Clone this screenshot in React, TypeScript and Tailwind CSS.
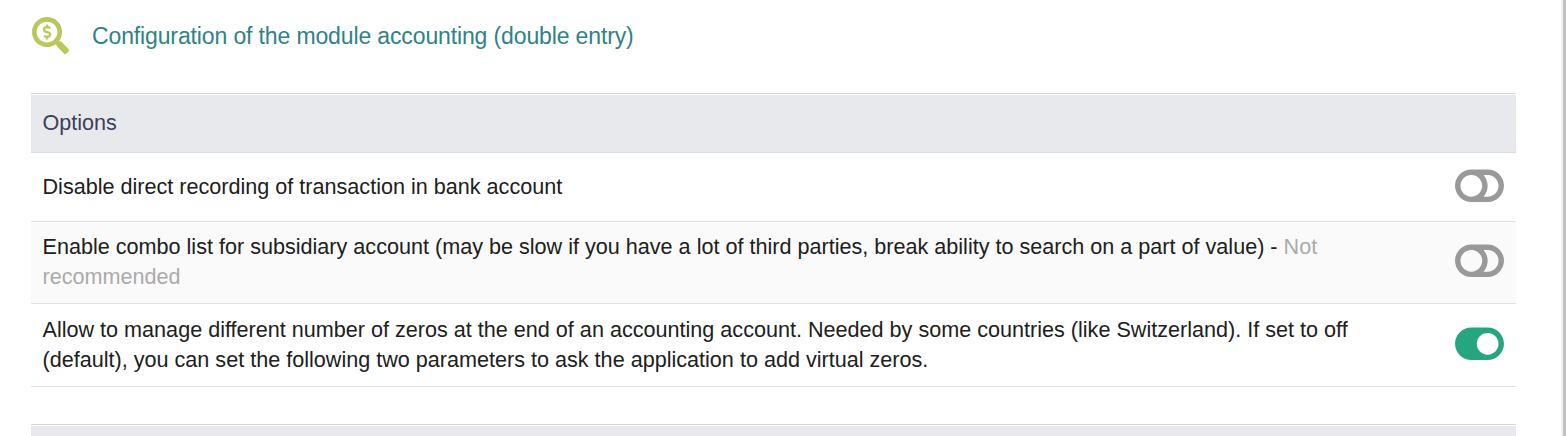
import React, { useState } from "react";
import { FaSearchDollar, FaToggleOff, FaToggleOn } from "react-icons/fa";

const options = [
  {
    id: "bank",
    label: "Disable direct recording of transaction in bank account",
    note: "",
    enabled: false,
    rowClass: "h-[69px] bg-white",
  },
  {
    id: "combo",
    label:
      "Enable combo list for subsidiary account (may be slow if you have a lot of third parties, break ability to search on a part of value) - ",
    note: "Not recommended",
    enabled: false,
    rowClass: "h-[82px] bg-[#fafafa] pb-[1px]",
  },
  {
    id: "zeros",
    label:
      "Allow to manage different number of zeros at the end of an accounting account. Needed by some countries (like Switzerland). If set to off (default), you can set the following two parameters to ask the application to add virtual zeros.",
    note: "",
    enabled: true,
    rowClass: "h-[83px] bg-white",
  },
];

const OptionRow = ({ option }: { option: (typeof options)[number] }) => {
  const [enabled, setEnabled] = useState(option.enabled);

  return (
    <div
      className={`flex items-center justify-between border-b border-[#e0e0e0] pl-[11.5px] pr-[12px] ${option.rowClass}`}
    >
      <p className="w-[1325px] text-[21.6px] leading-[30px] text-[#202020]">
        {option.label}
        {option.note && <span className="text-[#aaaaaa]">{option.note}</span>}
      </p>
      <button type="button" className="pb-[2.5px]" onClick={() => setEnabled(!enabled)}>
        {enabled ? (
          <FaToggleOn className="h-[43.5px] w-[49px] text-[#25a580]" />
        ) : (
          <FaToggleOff className="h-[43.5px] w-[49px] text-[#999999]" />
        )}
      </button>
    </div>
  );
};

const App = () => {
  return (
    <div className="flex h-[436px] justify-between overflow-hidden bg-white font-['Liberation_Sans',Arial,sans-serif]">
      <div className="ml-[31px] w-[1485px]">
        <div className="flex h-[93px] items-start pt-[16px]">
          <FaSearchDollar className="ml-[1px] mt-[0.5px] h-[37px] w-[37px] text-[#bbc75a]" />
          <h1 className="ml-[23px] mt-[5px] text-[23px] leading-[30px] tracking-[-0.13px] text-[#2f8286]">
            Configuration of the module accounting (double entry)
          </h1>
        </div>

        <div className="border-t border-[#d4d4d4] pt-px">
          <div className="flex h-[58px] items-center border-b border-[#dcdddd] bg-[#e8e9ed] pb-[2px] pl-[11.5px]">
            <h2 className="text-[21.6px] leading-[30px] text-[#3c4058]">Options</h2>
          </div>
          {options.map((option) => (
            <OptionRow key={option.id} option={option} />
          ))}
        </div>

        <div className="mt-[37px] border-t border-[#d4d4d4] pt-px">
          <div className="h-[58px] bg-[#e8e9ed]"></div>
        </div>
      </div>

      <div className="w-[5px] border-l-2 border-[#f0f0f0] bg-[#c1c1c1]"></div>
    </div>
  );
};

export default App;
